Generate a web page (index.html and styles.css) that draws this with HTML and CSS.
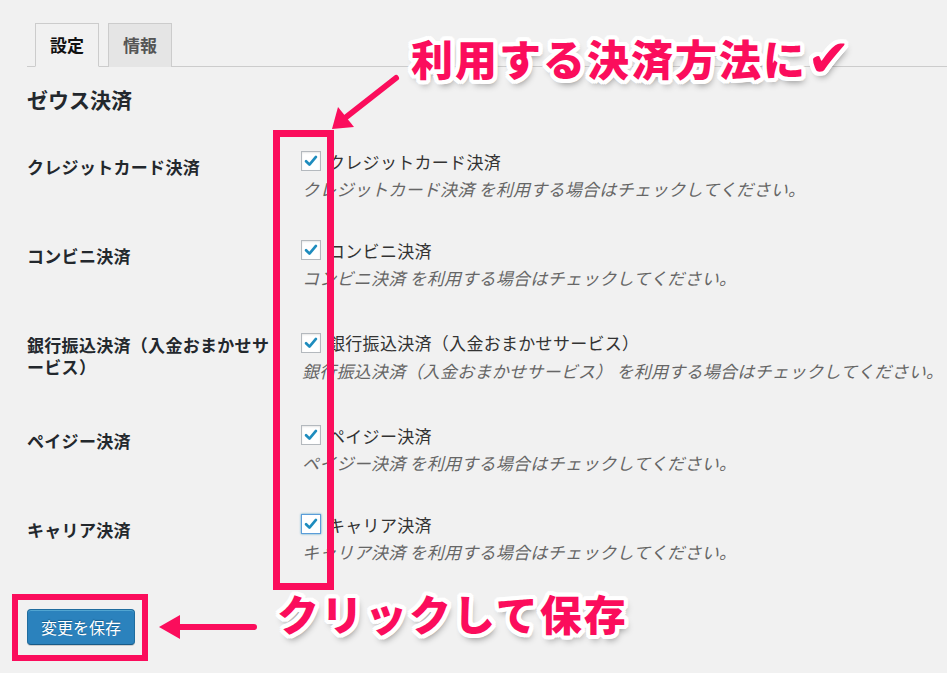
FILE: index.html
```html
<!DOCTYPE html>
<html lang="ja">
<head>
<meta charset="utf-8">
<title>ゼウス決済 設定</title>
<link rel="stylesheet" href="styles.css">
</head>
<body>
<div class="page">
  <nav class="tabs">
    <span class="tab active">設定</span>
    <span class="tab">情報</span>
  </nav>
  <h2 class="title">ゼウス決済</h2>
  <div class="form">
    <div class="row">
      <div class="th">クレジットカード決済</div>
      <div class="td">
        <label class="opt"><span class="cb"><svg viewBox="0 0 20 20"><path d="M4.5 10.2 L8.3 14 L15.5 5.5"/></svg></span>クレジットカード決済</label>
        <p class="desc">クレジットカード決済 を利用する場合はチェックしてください。</p>
      </div>
    </div>
    <div class="row">
      <div class="th">コンビニ決済</div>
      <div class="td">
        <label class="opt"><span class="cb"><svg viewBox="0 0 20 20"><path d="M4.5 10.2 L8.3 14 L15.5 5.5"/></svg></span>コンビニ決済</label>
        <p class="desc">コンビニ決済 を利用する場合はチェックしてください。</p>
      </div>
    </div>
    <div class="row">
      <div class="th">銀行振込決済（入金おまかせサービス）</div>
      <div class="td">
        <label class="opt"><span class="cb"><svg viewBox="0 0 20 20"><path d="M4.5 10.2 L8.3 14 L15.5 5.5"/></svg></span>銀行振込決済（入金おまかせサービス）</label>
        <p class="desc">銀行振込決済（入金おまかせサービス） を利用する場合はチェックしてください。</p>
      </div>
    </div>
    <div class="row">
      <div class="th">ペイジー決済</div>
      <div class="td">
        <label class="opt"><span class="cb"><svg viewBox="0 0 20 20"><path d="M4.5 10.2 L8.3 14 L15.5 5.5"/></svg></span>ペイジー決済</label>
        <p class="desc">ペイジー決済 を利用する場合はチェックしてください。</p>
      </div>
    </div>
    <div class="row">
      <div class="th">キャリア決済</div>
      <div class="td">
        <label class="opt"><span class="cb focus"><svg viewBox="0 0 20 20"><path d="M4.5 10.2 L8.3 14 L15.5 5.5"/></svg></span>キャリア決済</label>
        <p class="desc">キャリア決済 を利用する場合はチェックしてください。</p>
      </div>
    </div>
  </div>
  <div class="submit"><button class="btn" type="button">変更を保存</button></div>
</div>

<svg class="marks" width="947" height="673" viewBox="0 0 947 673">
  <rect x="276.5" y="133.5" width="54" height="453" fill="none" stroke="#fb0d5c" stroke-width="7"/>
  <rect x="15" y="597" width="130" height="61" fill="none" stroke="#fb0d5c" stroke-width="6"/>
  <line x1="396" y1="78" x2="345" y2="118" stroke="#fb0d5c" stroke-width="6" stroke-linecap="round"/>
  <polygon points="332,129 338,107 354,127" fill="#fb0d5c"/>
  <line x1="254" y1="627" x2="175" y2="627" stroke="#fb0d5c" stroke-width="6" stroke-linecap="round"/>
  <polygon points="159,627 180,615 180,639" fill="#fb0d5c"/>
</svg>
<div class="note note1">利用する決済方法に<span class="tick">✔</span></div>
<div class="note note2">クリックして保存</div>
</body>
</html>
```
FILE: styles.css
```css
html, body {
  margin: 0;
  padding: 0;
  background: #f1f1f1;
}
body {
  width: 947px;
  height: 673px;
  overflow: hidden;
  position: relative;
  font-family: "Noto Sans CJK JP", "Noto Sans", sans-serif;
  color: #23282d;
}
.page {
  padding: 23px 0 0 27px;
}
.tabs {
  display: flex;
  gap: 9px;
  border-bottom: 1px solid #cccccc;
  padding-left: 8px;
}
.tab {
  display: block;
  border: 1px solid #cccccc;
  border-bottom: none;
  margin-bottom: -1px;
  padding: 10px 14px 11px;
  font-size: 17px;
  line-height: 22px;
  font-weight: 700;
  color: #555555;
  background: #e5e5e5;
}
.tab.active {
  background: #f1f1f1;
  color: #111111;
  border-bottom: 1px solid #f1f1f1;
  padding-bottom: 10px;
}
.title {
  margin: 18px 0 17px;
  font-size: 21px;
  line-height: 28px;
  font-weight: 700;
  color: #23282d;
}
.row {
  display: flex;
  align-items: center;
}
.th {
  align-self: flex-start;
  flex: 0 0 275px;
  box-sizing: border-box;
  width: 275px;
  padding: 26px 26px 26px 0;
  font-size: 17px;
  line-height: 22px;
  font-weight: 700;
  letter-spacing: 0.3px;
  color: #23282d;
}
.td {
  flex: 1 1 auto;
  min-width: 0;
  padding: 19px 0;
}
.opt {
  display: flex;
  align-items: center;
  height: 24px;
  font-size: 17px;
  letter-spacing: 0.3px;
  color: #333333;
  white-space: nowrap;
}
.cb {
  flex: 0 0 20px;
  box-sizing: border-box;
  width: 20px;
  height: 20px;
  margin-right: 7px;
  margin-left: -1px;
  background: #ffffff;
  border: 1px solid #b4b9be;
  box-shadow: inset 0 1px 2px rgba(0, 0, 0, 0.1);
  display: flex;
}
.cb svg {
  width: 18px;
  height: 18px;
}
.cb path {
  fill: none;
  stroke: #1e8cbe;
  stroke-width: 3;
  stroke-linecap: round;
  stroke-linejoin: round;
}
.cb.focus {
  border-color: #5b9dd9;
  box-shadow: 0 0 2px rgba(30, 140, 190, 0.8);
}
.desc {
  margin: 5px 0 0;
  font-size: 17px;
  line-height: 22px;
  font-style: italic;
  letter-spacing: 0.25px;
  color: #666666;
  white-space: nowrap;
}
.submit {
  padding-top: 27px;
}
.btn {
  height: 36px;
  padding: 0 13px;
  border: 1px solid #1f6c9e;
  border-bottom-color: #185a87;
  border-radius: 4px;
  background: #2b82bd;
  color: #ffffff;
  font-family: "Noto Sans CJK JP", "Noto Sans", sans-serif;
  font-size: 16px;
  line-height: 34px;
  box-shadow: inset 0 1px 0 rgba(120, 200, 230, 0.5), 0 1px 0 rgba(0, 0, 0, 0.15);
  text-shadow: 0 -1px 1px #175d8a;
}
.marks {
  position: absolute;
  left: 0;
  top: 0;
}
.note {
  position: absolute;
  font-family: "Noto Sans CJK JP", sans-serif;
  font-weight: 900;
  font-size: 42px;
  line-height: 48px;
  letter-spacing: 2px;
  color: #fb0d5c;
  white-space: nowrap;
  text-shadow:
    4px 0 0 #fff, -4px 0 0 #fff, 0 4px 0 #fff, 0 -4px 0 #fff,
    3px 3px 0 #fff, -3px 3px 0 #fff, 3px -3px 0 #fff, -3px -3px 0 #fff,
    2px 4px 0 #fff, -2px 4px 0 #fff, 2px -4px 0 #fff, -2px -4px 0 #fff,
    4px 2px 0 #fff, -4px 2px 0 #fff, 4px -2px 0 #fff, -4px -2px 0 #fff,
    2px 5px 7px rgba(0, 0, 0, 0.45);
}
.note1 {
  left: 411px;
  top: 34px;
}
.note2 {
  left: 277px;
  top: 589px;
}
.tick {
  font-family: "DejaVu Sans", sans-serif;
  font-weight: 700;
  font-size: 52px;
  line-height: 48px;
  vertical-align: top;
}
```
